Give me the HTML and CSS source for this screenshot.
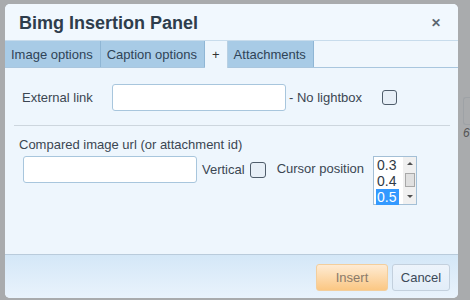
FILE: index.html
```html
<!DOCTYPE html>
<html>
<head>
<meta charset="utf-8">
<link rel="stylesheet" href="styles.css">
</head>
<body>
<div class="page">
  <div class="dialog">
    <div class="titlebar">
      <span class="title">Bimg Insertion Panel</span>
      <span class="close">&#x2715;</span>
    </div>
    <div class="tabs">
      <div class="tab">Image options</div>
      <div class="tab">Caption options</div>
      <div class="tab active">+</div>
      <div class="tab">Attachments</div>
      <div class="tabfill"></div>
    </div>
    <div class="content">
      <div class="row1">
        <label class="lbl-ext">External link</label>
        <div class="input input-ext"></div>
        <span class="lbl-nolb">- No lightbox</span>
        <div class="check check-lb"></div>
      </div>
      <div class="sep"></div>
      <div class="lbl-cmp">Compared image url (or attachment id)</div>
      <div class="row2">
        <div class="input input-cmp"></div>
        <span class="lbl-vert">Vertical</span>
        <div class="check check-vert"></div>
        <span class="lbl-cur">Cursor position</span>
        <div class="listbox">
          <div class="opts">
            <div class="opt">0.3</div>
            <div class="opt">0.4</div>
            <div class="opt sel"><span>0.5</span></div>
          </div>
          <div class="sbar">
            <span class="arr up"></span>
            <span class="thumb"></span>
            <span class="arr down"></span>
          </div>
        </div>
      </div>
    </div>
    <div class="footer">
      <div class="btn insert">Insert</div>
      <div class="btn cancel">Cancel</div>
    </div>
  </div>
  <div class="side">
    <div class="side-box"></div>
    <div class="side-glyph">6</div>
  </div>
</div>
</body>
</html>
```
FILE: styles.css
```css
html, body {
  margin: 0;
  padding: 0;
}
body {
  background: #a9abad;
  font-family: "Liberation Sans", Arial, sans-serif;
  font-size: 13px;
  color: #3b4652;
  width: 470px;
  height: 300px;
  overflow: hidden;
}
.page {
  display: flex;
  align-items: flex-start;
  padding: 4px 0 0 5px;
}
.dialog {
  width: 453px;
  height: 294px;
  background: #eef6fd;
  border-radius: 5px;
  display: flex;
  flex-direction: column;
  overflow: hidden;
  flex-shrink: 0;
}
.titlebar {
  height: 36px;
  display: flex;
  align-items: center;
  justify-content: space-between;
  padding: 0 17px 0 14px;
  background: #f1f8fe;
}
.title {
  font-size: 18px;
  font-weight: bold;
  color: #2e3d4c;
  position: relative;
  top: 1px;
}
.close {
  font-size: 12px;
  font-weight: bold;
  color: #5b6670;
  position: relative;
  top: 1px;
}
.tabs {
  display: flex;
  height: 26px;
  border-top: 1px solid #c8dcec;
  border-bottom: 1px solid #a9c6de;
}
.tab {
  background: #a8cbe6;
  color: #2f4357;
  padding: 0 7px 0 6px;
  display: flex;
  align-items: center;
  border-right: 1px solid #8fb6d5;
  height: 26px;
}
.tab.active {
  background: #eef6fd;
  height: 27px;
  padding: 0 7px 0 7px;
  color: #333;
  border-right: 1px solid #b8d0e3;
}
.tabfill {
  flex: 1;
  background: #f0f7fd;
}
.content {
  flex: 1;
  background: #eef6fd;
  padding: 16px 8px 0 9px;
}
.row1 {
  display: flex;
  align-items: center;
  height: 27px;
}
.lbl-ext {
  margin-left: 8px;
  width: 90px;
}
.input {
  background: #fff;
  border: 1px solid #a8c6dd;
  border-radius: 3px;
  height: 25px;
  box-sizing: border-box;
}
.input-ext {
  width: 174px;
  height: 27px;
}
.lbl-nolb {
  margin-left: 3px;
  width: 93px;
}
.check {
  width: 15px;
  height: 15px;
  box-sizing: border-box;
  border: 1px solid #4f5d6b;
  border-radius: 3px;
  background: #e7eff7;
}
.sep {
  height: 1px;
  background: #cdd6de;
  margin: 14px 0 0 0;
  width: 436px;
}
.lbl-cmp {
  margin: 11px 0 0 5px;
  line-height: 15px;
}
.row2 {
  display: flex;
  align-items: flex-start;
  margin: 4px 0 0 9px;
}
.input-cmp {
  width: 174px;
  height: 27px;
}
.lbl-vert {
  margin: 6px 0 0 5px;
}
.check-vert {
  margin: 6px 0 0 5px;
  width: 16px;
  height: 16px;
}
.lbl-cur {
  margin: 5px 0 0 11px;
}
.listbox {
  margin-left: 9px;
  width: 44px;
  height: 49px;
  box-sizing: border-box;
  border: 1px solid #a3bfd6;
  background: #fff;
  display: flex;
  font-size: 14px;
  color: #2f3a45;
}
.opts {
  flex: 1;
}
.opt {
  height: 16px;
  line-height: 16px;
  padding-left: 3px;
}
.opt.sel {
  padding-left: 2px;
}
.opt.sel span {
  background: #3399ff;
  color: #fff;
  padding: 0 2px 0 1px;
  display: inline-block;
  line-height: 16px;
}
.sbar {
  width: 13px;
  background: #f0f0f0;
  display: flex;
  flex-direction: column;
  align-items: center;
  justify-content: space-between;
  padding: 5px 0 6px;
  box-sizing: border-box;
}
.arr {
  width: 0;
  height: 0;
  border-left: 3px solid transparent;
  border-right: 3px solid transparent;
}
.arr.up {
  border-bottom: 3px solid #505050;
}
.arr.down {
  border-top: 3px solid #505050;
}
.thumb {
  width: 10px;
  height: 14px;
  box-sizing: border-box;
  background: #e0e0e0;
  border: 1px solid #a8a8a8;
}
.footer {
  height: 44px;
  box-sizing: border-box;
  flex-shrink: 0;
  border-top: 1px solid #b9cbdb;
  background: linear-gradient(#d4e7f7, #e9f3fc);
  display: flex;
  justify-content: flex-end;
  align-items: flex-start;
  padding: 9px 8px 0 0;
  gap: 4px;
}
.btn {
  height: 27px;
  box-sizing: border-box;
  border-radius: 3px;
  display: flex;
  align-items: center;
  justify-content: center;
  font-size: 13px;
}
.insert {
  width: 72px;
  background: linear-gradient(#feebd3, #fbc783);
  border: 1px solid #f3ce9c;
  color: #8a7a6a;
}
.cancel {
  width: 58px;
  background: linear-gradient(#edf4fb, #e2edf8);
  border: 1px solid #c3d0dd;
  color: #3c4a58;
}
.side {
  flex: 1;
  height: 296px;
}
.side-box {
  margin: 93px 0 0 5px;
  height: 26px;
  border: 1px solid #9ea2a6;
  border-right: none;
  border-radius: 3px 0 0 3px;
}
.side-glyph {
  margin: 1px 0 0 5px;
  font-size: 12px;
  font-style: italic;
  color: #555;
}
```
